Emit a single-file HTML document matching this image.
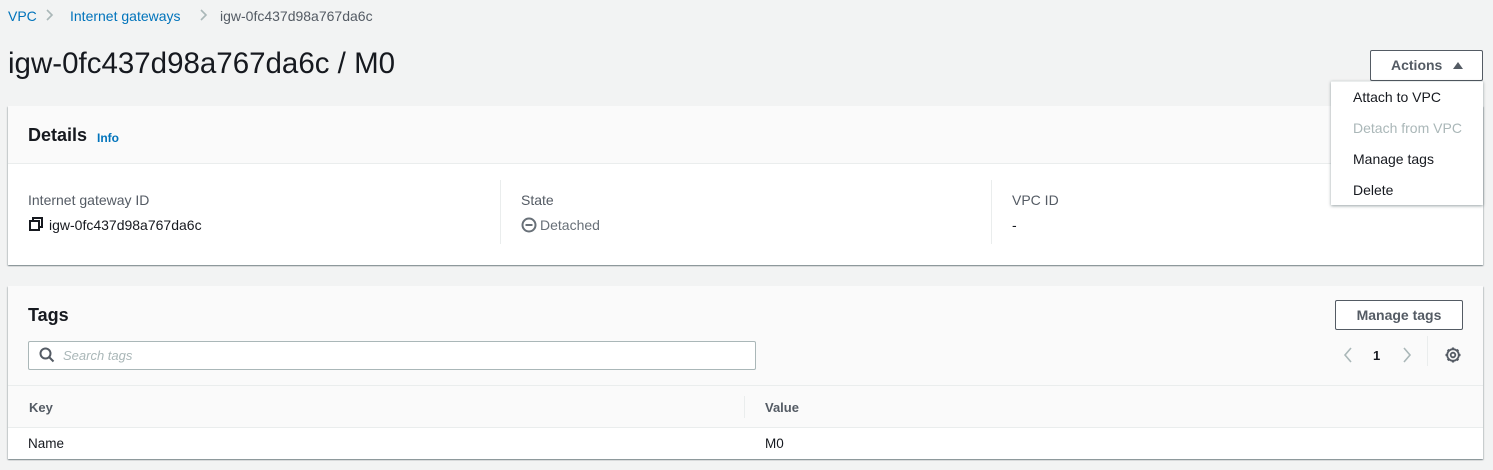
<!DOCTYPE html>
<html><head><style>
*{margin:0;padding:0;box-sizing:border-box}
body{width:1493px;height:470px;background:#f2f3f3;font-family:"Liberation Sans",sans-serif;color:#16191f;position:relative;overflow:hidden;font-size:14px}
.a{position:absolute;white-space:nowrap}
.card{position:absolute;background:#fff;box-shadow:0 1px 1px 0 rgba(0,28,36,.3),1px 1px 1px 0 rgba(0,28,36,.15),-1px 1px 1px 0 rgba(0,28,36,.15)}
.lbl{color:#545b64}
.btn{position:absolute;border:1px solid #545b64;border-radius:2px;background:#fff;color:#545b64;font-weight:bold;font-size:14px;text-align:center}
</style></head><body>
<div class="a" style="left:8px;top:8px;color:#0073bb">VPC</div>
<svg class="a" style="left:44px;top:8px" width="12" height="14"><path d="M3 2l5 5-5 5" stroke="#aab7b8" stroke-width="1.6" fill="none"/></svg>
<div class="a" style="left:70px;top:8px;color:#0073bb">Internet gateways</div>
<svg class="a" style="left:198px;top:8px" width="12" height="14"><path d="M3 2l5 5-5 5" stroke="#aab7b8" stroke-width="1.6" fill="none"/></svg>
<div class="a" style="left:220px;top:8px;color:#545b64">igw-0fc437d98a767da6c</div>
<div class="a" style="left:8px;top:47px;font-size:29.5px">igw-0fc437d98a767da6c / M0</div>

<div class="card" style="left:8px;top:106px;width:1475px;height:159px">
 <div style="height:58px;background:#fafafa;border-bottom:1px solid #eaeded"></div>
 <div class="a" style="left:20px;top:19px;font-size:18px;font-weight:bold">Details</div>
 <div class="a" style="left:89px;top:25px;font-size:12px;font-weight:bold;color:#0073bb">Info</div>
 <div class="a lbl" style="left:20px;top:86px">Internet gateway ID</div>
 <svg class="a" style="left:21px;top:111px" width="14" height="14"><rect x="4" y="1" width="9" height="9" fill="none" stroke="#16191f" stroke-width="2"/><rect x="1" y="4" width="9" height="9" fill="#fff" stroke="#16191f" stroke-width="2"/></svg>
 <div class="a" style="left:41px;top:111px">igw-0fc437d98a767da6c</div>
 <div class="a" style="left:492px;top:74px;width:1px;height:64px;background:#eaeded"></div>
 <div class="a lbl" style="left:513px;top:86px">State</div>
 <svg class="a" style="left:513px;top:111px" width="16" height="16"><circle cx="8" cy="8" r="6.5" fill="none" stroke="#687078" stroke-width="2"/><path d="M4.5 8h7" stroke="#687078" stroke-width="2"/></svg>
 <div class="a" style="left:532px;top:111px;color:#687078">Detached</div>
 <div class="a" style="left:983px;top:74px;width:1px;height:64px;background:#eaeded"></div>
 <div class="a lbl" style="left:1004px;top:86px">VPC ID</div>
 <div class="a" style="left:1004px;top:111px">-</div>
</div>

<div class="card" style="left:8px;top:286px;width:1475px;height:173px">
 <div style="height:100px;background:#fafafa;border-bottom:1px solid #eaeded"></div>
 <div style="height:42px;background:#fafafa;border-bottom:1px solid #eaeded"></div>
 <div class="a" style="left:20px;top:19px;font-size:18px;font-weight:bold">Tags</div>
 <div class="a" style="left:20px;top:55px;width:728px;height:29px;border:1px solid #aab7b8;border-radius:2px;background:#fff"></div>
 <svg class="a" style="left:31px;top:61px" width="16" height="16"><circle cx="6.5" cy="6.5" r="5" fill="none" stroke="#545b64" stroke-width="2"/><path d="M10 10l4.5 4.5" stroke="#545b64" stroke-width="2"/></svg>
 <div class="a" style="left:55px;top:62px;font-size:13px;font-style:italic;color:#aab7b8">Search tags</div>
 <div class="btn" style="left:1327px;top:14px;width:128px;height:30px;line-height:28px">Manage tags</div>
 <svg class="a" style="left:1334px;top:60px" width="12" height="18"><path d="M9 2L3 9l6 7" stroke="#aab7b8" stroke-width="1.6" fill="none"/></svg>
 <div class="a" style="left:1365px;top:62px;font-weight:bold;font-size:13px">1</div>
 <svg class="a" style="left:1393px;top:60px" width="12" height="18"><path d="M3 2l6 7-6 7" stroke="#aab7b8" stroke-width="1.6" fill="none"/></svg>
 <div class="a" style="left:1419px;top:50px;width:1px;height:30px;background:#eaeded"></div>
 <svg class="a" style="left:1436px;top:60px" width="18" height="18"><circle cx="9" cy="9" r="2.3" fill="none" stroke="#545b64" stroke-width="1.8"/><circle cx="9" cy="9" r="5.8" fill="none" stroke="#545b64" stroke-width="1.8"/><path d="M9 1.5v2.5M9 14v2.5M1.5 9h2.5M14 9h2.5M3.7 3.7l1.8 1.8M12.5 12.5l1.8 1.8M3.7 14.3l1.8-1.8M12.5 5.5l1.8-1.8" stroke="#545b64" stroke-width="2.2"/></svg>
 <div class="a" style="left:21px;top:114px;font-weight:bold;font-size:13px;color:#545b64">Key</div>
 <div class="a" style="left:736px;top:110px;width:1px;height:22px;background:#eaeded"></div>
 <div class="a" style="left:757px;top:114px;font-weight:bold;font-size:13px;color:#545b64">Value</div>
 <div class="a" style="left:20px;top:150px;font-size:13.5px">Name</div>
 <div class="a" style="left:757px;top:150px;font-size:13.5px">M0</div>
</div>

<div class="btn" style="left:1370px;top:50px;width:113px;height:31px;line-height:29px;text-align:left;padding-left:20px">Actions</div>
<svg class="a" style="left:1452px;top:60px" width="12" height="10"><path d="M1 9L6 2l5 7z" fill="#545b64"/></svg>
<div class="a" style="left:1331px;top:81px;width:152px;height:124px;background:#fff;box-shadow:0 1px 3px rgba(0,28,36,.4);border-top:1px solid #eaeded">
 <div class="a" style="left:22px;top:7px">Attach to VPC</div>
 <div class="a" style="left:22px;top:38px;color:#aab7b8">Detach from VPC</div>
 <div class="a" style="left:22px;top:69px">Manage tags</div>
 <div class="a" style="left:22px;top:100px">Delete</div>
</div>
</body></html>
